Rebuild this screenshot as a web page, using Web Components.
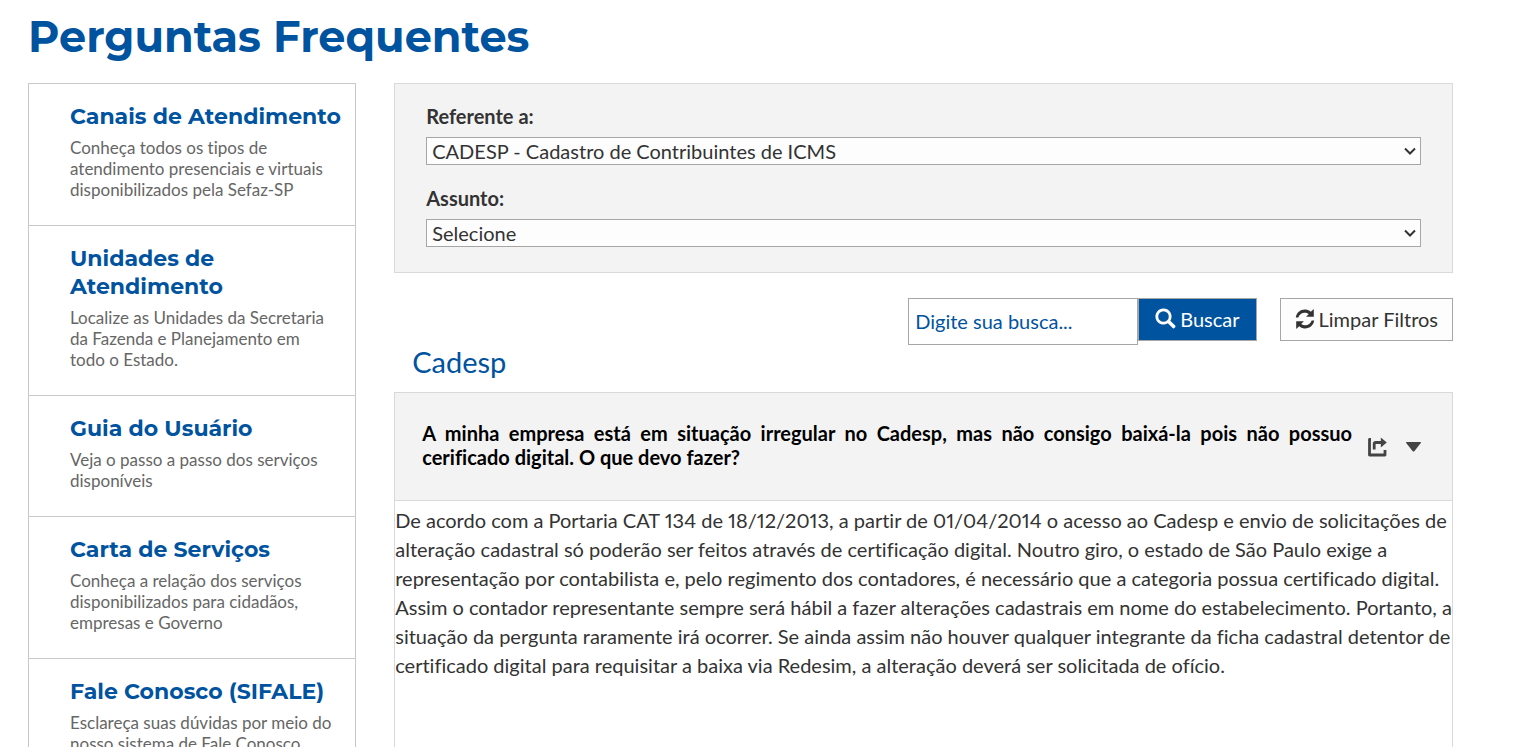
<!DOCTYPE html>
<html lang="pt-BR">
<head>
  <meta charset="utf-8">
  <meta name="viewport" content="width=device-width, initial-scale=1">
  <title>Perguntas Frequentes</title>
  <style>
    :root {
      --blue: #00539f;
      --text: #333;
      --gray: #666;
      --panel: #f3f3f3;
      --panel-border: #d9d9d9;
      --side-border: #c8c8c8;
      --field-border: #a6a6a6;
      --heading-font: Montserrat, Inter, sans-serif;
      scrollbar-width: none;
    }

    body {
      margin: 0;
      background: #fff;
      color: var(--text);
      font-family: Lato, sans-serif;
      font-size: 20px;
      font-variant-ligatures: no-common-ligatures;
      font-variant-numeric: proportional-nums;
    }
  </style>
</head>
<body>
  <faq-page>
    <span slot="title">Perguntas Frequentes</span>

    <side-menu slot="menu">
      <side-link heading="Canais de Atendimento">Conheça todos os tipos de atendimento presenciais e virtuais disponibilizados pela Sefaz-SP</side-link>
      <side-link heading="Unidades de Atendimento">Localize as Unidades da Secretaria da Fazenda e Planejamento em todo o Estado.</side-link>
      <side-link heading="Guia do Usuário">Veja o passo a passo dos serviços disponíveis</side-link>
      <side-link heading="Carta de Serviços">Conheça a relação dos serviços disponibilizados para cidadãos, empresas e Governo</side-link>
      <side-link heading="Fale Conosco (SIFALE)">Esclareça suas dúvidas por meio do nosso sistema de Fale Conosco</side-link>
    </side-menu>

    <filter-panel>
      <filter-field label="Referente a:" options="CADESP - Cadastro de Contribuintes de ICMS"></filter-field>
      <filter-field label="Assunto:" options="Selecione"></filter-field>
    </filter-panel>

    <search-bar></search-bar>

    <faq-group heading="Cadesp">
      <faq-item>
        <span slot="question">A minha empresa está em situação irregular no Cadesp, mas não consigo baixá-la pois não possuo cerificado digital. O que devo fazer?</span>
        De acordo com a Portaria CAT 134 de 18/12/2013, a partir de 01/04/2014 o acesso ao Cadesp e envio de solicitações de alteração cadastral só poderão ser feitos através de certificação digital. Noutro giro, o estado de São Paulo exige a representação por contabilista e, pelo regimento dos contadores, é necessário que a categoria possua certificado digital. Assim o contador representante sempre será hábil a fazer alterações cadastrais em nome do estabelecimento. Portanto, a situação da pergunta raramente irá ocorrer. Se ainda assim não houver qualquer integrante da ficha cadastral detentor de certificado digital para requisitar a baixa via Redesim, a alteração deverá ser solicitada de ofício.
      </faq-item>
    </faq-group>
  </faq-page>

  <script>
    class FaqPage extends HTMLElement {
      constructor() {
        super();
        this.attachShadow({ mode: 'open' }).innerHTML = `
          <style>
            :host {
              display: block;
              padding: 12px 78px 0 28px;
            }
            h1 {
              margin: 0 0 21px;
              color: var(--blue);
              font: 700 43px/50px var(--heading-font);
            }
            .columns {
              display: grid;
              grid-template-columns: 31fr 100fr;
              gap: 38px;
              align-items: start;
            }
            main {
              min-width: 0;
            }
          </style>
          <h1><slot name="title"></slot></h1>
          <div class="columns">
            <slot name="menu"></slot>
            <main><slot></slot></main>
          </div>
        `;
      }
    }

    class SideMenu extends HTMLElement {
      constructor() {
        super();
        this.attachShadow({ mode: 'open' }).innerHTML = `
          <style>
            :host {
              display: block;
              border: 1px solid var(--side-border);
              border-top: 0;
            }
          </style>
          <nav><slot></slot></nav>
        `;
      }
    }

    class SideLink extends HTMLElement {
      constructor() {
        super();
        this.attachShadow({ mode: 'open' });
      }

      connectedCallback() {
        this.shadowRoot.innerHTML = `
          <style>
            :host {
              display: block;
              border-top: 1px solid var(--side-border);
            }
            a {
              display: block;
              padding: 19px 12px 25px 41px;
              text-decoration: none;
            }
            h2 {
              margin: 0 0 6px;
              color: var(--blue);
              font: 700 22px/28px var(--heading-font);
            }
            p {
              margin: 0;
              padding-right: 8px;
              color: var(--gray);
              font-size: 17px;
              line-height: 21px;
            }
          </style>
          <a href="#">
            <h2>${this.getAttribute('heading')}</h2>
            <p><slot></slot></p>
          </a>
        `;
      }
    }

    class FilterPanel extends HTMLElement {
      constructor() {
        super();
        this.attachShadow({ mode: 'open' }).innerHTML = `
          <style>
            :host {
              display: flex;
              flex-direction: column;
              gap: 21px;
              padding: 20px 31px 25px;
              background: var(--panel);
              border: 1px solid var(--panel-border);
            }
          </style>
          <slot></slot>
        `;
      }
    }

    class FilterField extends HTMLElement {
      constructor() {
        super();
        this.attachShadow({ mode: 'open' });
      }

      connectedCallback() {
        const options = this.getAttribute('options').split('|');
        this.shadowRoot.innerHTML = `
          <style>
            :host {
              display: flex;
              flex-direction: column;
              gap: 9px;
            }
            label {
              font-weight: 700;
              line-height: 24px;
            }
            .box {
              display: grid;
              align-items: center;
            }
            select, svg {
              grid-area: 1 / 1;
            }
            select {
              appearance: none;
              width: 100%;
              height: 28px;
              padding: 0 24px 0 5px;
              background: #fdfdfd;
              border: 1px solid var(--field-border);
              border-radius: 0;
              color: var(--text);
              font: inherit;
            }
            svg {
              justify-self: end;
              margin-right: 5px;
              pointer-events: none;
            }
          </style>
          <label for="field">${this.getAttribute('label')}</label>
          <div class="box">
            <select id="field">
              ${options.map(o => `<option>${o}</option>`).join('')}
            </select>
            <svg width="12" height="8" viewBox="0 0 12 8" fill="none" stroke="#333" stroke-width="2">
              <path d="M1 1.500l5 5 5-5"/>
            </svg>
          </div>
        `;
      }
    }

    class SearchBar extends HTMLElement {
      constructor() {
        super();
        this.attachShadow({ mode: 'open' }).innerHTML = `
          <style>
            :host {
              display: block;
              margin-top: 25px;
            }
            form {
              display: flex;
              justify-content: flex-end;
              align-items: flex-start;
            }
            input, button {
              box-sizing: border-box;
              margin: 0;
              border: 1px solid var(--field-border);
              border-radius: 0;
              font: inherit;
            }
            input {
              width: 230px;
              height: 47px;
              padding: 0 6px 2px;
              background: #fff;
              color: var(--blue);
            }
            input::placeholder {
              color: var(--blue);
              opacity: 1;
            }
            button {
              display: flex;
              align-items: center;
              gap: 4px;
              height: 43px;
              padding: 0 14px 2px;
              background: #fdfdfd;
              color: var(--text);
              cursor: pointer;
            }
            .search {
              padding: 0 16px 2px;
              background: var(--blue);
              color: #fff;
            }
            .clear {
              margin-left: 23px;
            }
            svg {
              display: block;
              fill: currentColor;
            }
          </style>
          <form>
            <input type="text" placeholder="Digite sua busca..." aria-label="Digite sua busca">
            <button type="button" class="search">
              <svg width="21" height="21" viewBox="0 0 21 21">
                <path fill-rule="evenodd" d="M8.500.5a8 8 0 1 0 4.300 14.700l4.600 4.600a1.600 1.600 0 0 0 2.300 0l.2-.2a1.600 1.600 0 0 0 0-2.300l-4.600-4.600A8 8 0 0 0 8.500.5zm0 2.700a5.300 5.300 0 1 1 0 10.600a5.300 5.300 0 0 1 0-10.600z"/>
              </svg>
              Buscar
            </button>
            <button type="reset" class="clear">
              <svg width="20" height="22" viewBox="0 0 20 22">
                <path d="M.8 9.500C1.500 4 6.500.7 12 1.800q2.200.5 3.800 2L18.800 1v7.800h-7.700l2.700-2.700C10 3.300 4.800 4.800 3.300 9.500zM19.200 12.500c-.7 5.500-5.700 8.800-11.200 7.700q-2.200-.5-3.800-2L1.200 21v-7.800h7.700l-2.700 2.700c3.800 2.800 9 1.300 10.500-3.400z"/>
              </svg>
              Limpar Filtros
            </button>
          </form>
        `;
      }
    }

    class FaqGroup extends HTMLElement {
      constructor() {
        super();
        this.attachShadow({ mode: 'open' });
      }

      connectedCallback() {
        this.shadowRoot.innerHTML = `
          <style>
            :host {
              display: block;
            }
            h2 {
              margin: 0 0 13px;
              padding-left: 18px;
              color: var(--blue);
              font-size: 29px;
              font-weight: 400;
              line-height: 34px;
            }
          </style>
          <h2>${this.getAttribute('heading')}</h2>
          <slot></slot>
        `;
      }
    }

    class FaqItem extends HTMLElement {
      constructor() {
        super();
        this.attachShadow({ mode: 'open' }).innerHTML = `
          <style>
            :host {
              display: block;
              border: 1px solid var(--panel-border);
            }
            header {
              display: flex;
              align-items: center;
              padding: 28px 31px 31px 27px;
              background: var(--panel);
              border-bottom: 1px solid var(--panel-border);
            }
            h3 {
              flex: 1;
              margin: 0 16px 0 0;
              color: #000;
              font-size: 20px;
              font-weight: 700;
              line-height: 24px;
              text-align: justify;
            }
            button {
              margin: 0;
              padding: 4px 0 0;
              background: none;
              border: 0;
              color: #444;
              cursor: pointer;
            }
            .toggle {
              margin-left: 19px;
            }
            svg {
              display: block;
            }
            .answer {
              min-height: 300px;
              padding-top: 5px;
              line-height: 29px;
            }
            .answer[hidden] {
              display: none;
            }
          </style>
          <header>
            <h3><slot name="question"></slot></h3>
            <button type="button" aria-label="Compartilhar">
              <svg width="19" height="20" viewBox="0 0 19 20">
                <path d="M3 2.500H1.500V18h15.500V13M6.200 12.500V7q0-1.500 1.500-1.500H13" fill="none" stroke="currentColor" stroke-width="2.800" stroke-linejoin="round"/>
                <path d="M12.800.5l6 5-6 5z" fill="currentColor"/>
              </svg>
            </button>
            <button type="button" class="toggle" aria-label="Abrir ou fechar" aria-expanded="true">
              <svg width="15" height="10" viewBox="0 0 15 10">
                <path d="M.5 0h14q.8.300.300 1L8.300 9.200q-.8.800-1.600 0L.2 1Q-.3.300.5 0z" fill="currentColor"/>
              </svg>
            </button>
          </header>
          <div class="answer"><slot></slot></div>
        `;
      }

      connectedCallback() {
        const toggle = this.shadowRoot.querySelector('.toggle');
        const answer = this.shadowRoot.querySelector('.answer');
        toggle.onclick = () => {
          answer.hidden = !answer.hidden;
          toggle.setAttribute('aria-expanded', String(!answer.hidden));
        };
      }
    }

    customElements.define('faq-page', FaqPage);
    customElements.define('side-menu', SideMenu);
    customElements.define('side-link', SideLink);
    customElements.define('filter-panel', FilterPanel);
    customElements.define('filter-field', FilterField);
    customElements.define('search-bar', SearchBar);
    customElements.define('faq-group', FaqGroup);
    customElements.define('faq-item', FaqItem);
  </script>
</body>
</html>
